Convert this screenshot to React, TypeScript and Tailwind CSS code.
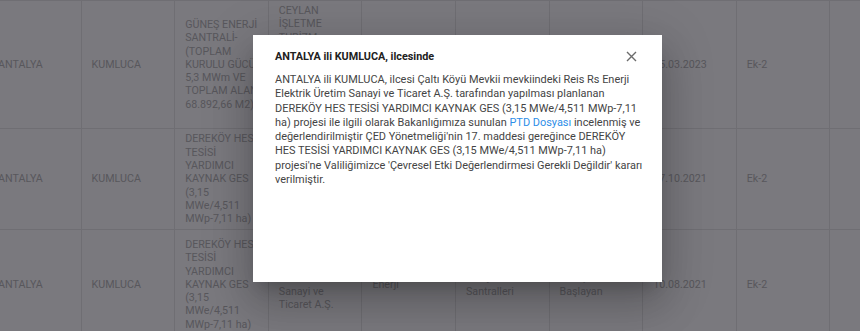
import React from "react";

type Cell = { lines: string[]; top?: boolean };
type Row = { h: string; cells: Cell[] };

const c = (lines: string[], top = false): Cell => ({ lines, top });

const rows: Row[] = [
  {
    h: "h-[128px]",
    cells: [
      c(["ANTALYA"]),
      c(["KUMLUCA"]),
      c(["GÜNEŞ ENERJİ", "SANTRALİ-", "(TOPLAM", "KURULU GÜCÜ", "5,3 MWm VE", "TOPLAM ALANI", "68.892,66 M2)"]),
      c(["CEYLAN", "İŞLETME", "TURİZM"], true),
      c([]),
      c([]),
      c([]),
      c(["15.03.2023"]),
      c(["Ek-2"]),
      c([]),
    ],
  },
  {
    h: "h-[101px]",
    cells: [
      c(["ANTALYA"]),
      c(["KUMLUCA"]),
      c(["DEREKÖY HES", "TESİSİ", "YARDIMCI", "KAYNAK GES", "(3,15", "MWe/4,511", "MWp-7,11 ha)"]),
      c([]),
      c([]),
      c([]),
      c([]),
      c(["07.10.2021"]),
      c(["Ek-2"]),
      c([]),
    ],
  },
  {
    h: "h-[110px]",
    cells: [
      c(["ANTALYA"]),
      c(["KUMLUCA"]),
      c(["DEREKÖY HES", "TESİSİ", "YARDIMCI", "KAYNAK GES", "(3,15", "MWe/4,511", "MWp-7,11 ha)"]),
      c(["Reis Rs Enerji", "Elektrik Üretim", "Sanayi ve", "Ticaret A.Ş."]),
      c(["Enerji"]),
      c(["Enerji", "Santralleri"]),
      c(["Süreç", "Başlayan"]),
      c(["10.08.2021"]),
      c(["Ek-2"]),
      c([]),
    ],
  },
];

export default function App() {
  return (
    <div className="relative w-[860px] h-[331px] overflow-hidden bg-[#7a797e] font-['Roboto',sans-serif]">
      <div className="-ml-[12px] w-max">
        {rows.map((row, ri) => (
          <div
            key={ri}
            className={`grid grid-cols-[repeat(10,93.6px)] border-t border-[#6f6e73] ${row.h}`}
          >
            {row.cells.map((cell, ci) => (
              <div
                key={ci}
                className={
                  cell.top
                    ? "flex items-start pt-[3px] border-r border-[#6f6e73] pl-[10px] pr-[8px] overflow-hidden"
                    : "flex items-center border-r border-[#6f6e73] pl-[10px] pr-[8px] overflow-hidden"
                }
              >
                <div className="text-[10.7px] leading-[13.3px] text-[#58575c]">
                  {cell.lines.map((line, li) => (
                    <div key={li} className="whitespace-nowrap">
                      {line}
                    </div>
                  ))}
                </div>
              </div>
            ))}
          </div>
        ))}
      </div>

      <div className="absolute left-[253px] top-[35px] w-[409px] h-[247px] bg-white shadow-[0_11px_15px_-7px_rgba(0,0,0,0.2),0_24px_38px_3px_rgba(0,0,0,0.14),0_9px_46px_8px_rgba(0,0,0,0.12)]">
        <div className="flex items-start justify-between pl-[22px] pr-[25px] pt-[15px]">
          <div className="text-[10.8px] leading-[14px] font-bold text-[#212121]">
            ANTALYA ili KUMLUCA, ilcesinde
          </div>
          <svg width="11" height="11" viewBox="0 0 11 11" className="mt-[1px]">
            <path d="M1 1 L10 10 M10 1 L1 10" stroke="#6b6b6b" strokeWidth="1.4" />
          </svg>
        </div>
        <div className="pl-[22px] pr-[16px] pt-[9px] text-[10.95px] leading-[14.3px] text-[#444444]">
          ANTALYA ili KUMLUCA, ilcesi Çaltı Köyü Mevkii mevkiindeki Reis Rs Enerji Elektrik Üretim Sanayi ve Ticaret A.Ş. tarafından yapılması planlanan DEREKÖY HES TESİSİ YARDIMCI KAYNAK GES (3,15 MWe/4,511 MWp-7,11 ha) projesi ile ilgili olarak Bakanlığımıza sunulan <span className="text-[#2d8ee8]">PTD Dosyası</span> incelenmiş ve değerlendirilmiştir ÇED Yönetmeliği'nin 17. maddesi gereğince DEREKÖY HES TESİSİ YARDIMCI KAYNAK GES (3,15 MWe/4,511 MWp-7,11 ha) projesi'ne Valiliğimizce 'Çevresel Etki Değerlendirmesi Gerekli Değildir' kararı verilmiştir.
        </div>
      </div>
    </div>
  );
}
